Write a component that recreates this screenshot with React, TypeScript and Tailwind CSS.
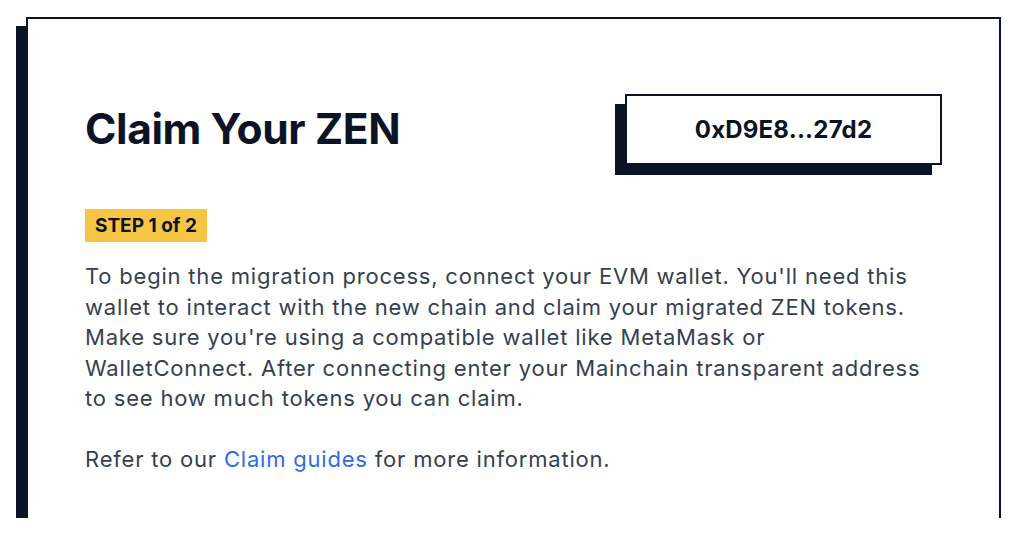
import React from "react";

const WalletButton = ({ address }: { address: string }) => (
  <button className="flex h-[71px] w-[317px] items-center justify-center border-2 border-[#0b1324] bg-white text-[24px] font-bold tracking-[0.2px] text-[#0b1324] shadow-[-10px_10px_0_#0b1324]">
    {address}
  </button>
);

export default function App() {
  return (
    <div className="h-[536px] w-[1016px] bg-white font-['Inter',sans-serif]">
      <div className="h-[518px] overflow-hidden pt-[17px]">
        <div className="ml-[26px] h-[520px] w-[975px] border-x-2 border-t-2 border-[#0b1324] bg-white px-[57px] pt-[75px] shadow-[-10px_9px_0_#0b1324]">
          <div className="flex items-center justify-between">
            <h1 className="text-[42.5px] font-bold leading-none tracking-[-0.4px] text-[#0b1324]">Claim Your ZEN</h1>
            <WalletButton address="0xD9E8...27d2" />
          </div>
          <div className="mt-[44px] inline-block bg-[#f6c544] px-[10px] py-[5px] text-[19px] font-bold leading-[23px] text-[#0b1324]">
            STEP 1 of 2
          </div>
          <p className="mt-[19px] max-w-[848px] text-[22px] leading-[30.5px] tracking-[0.8px] text-[#353f51]">
            To begin the migration process, connect your EVM wallet. You'll need this wallet to interact with the new
            chain and claim your migrated ZEN tokens. Make sure you're using a compatible wallet like MetaMask or
            WalletConnect. After connecting enter your Mainchain transparent address to see how much tokens you can
            claim.
          </p>
          <p className="mt-[30.5px] text-[22px] leading-[30.5px] tracking-[0.8px] text-[#353f51]">
            Refer to our <a className="text-[#2f6ce5]">Claim guides</a> for more information.
          </p>
        </div>
      </div>
    </div>
  );
}
